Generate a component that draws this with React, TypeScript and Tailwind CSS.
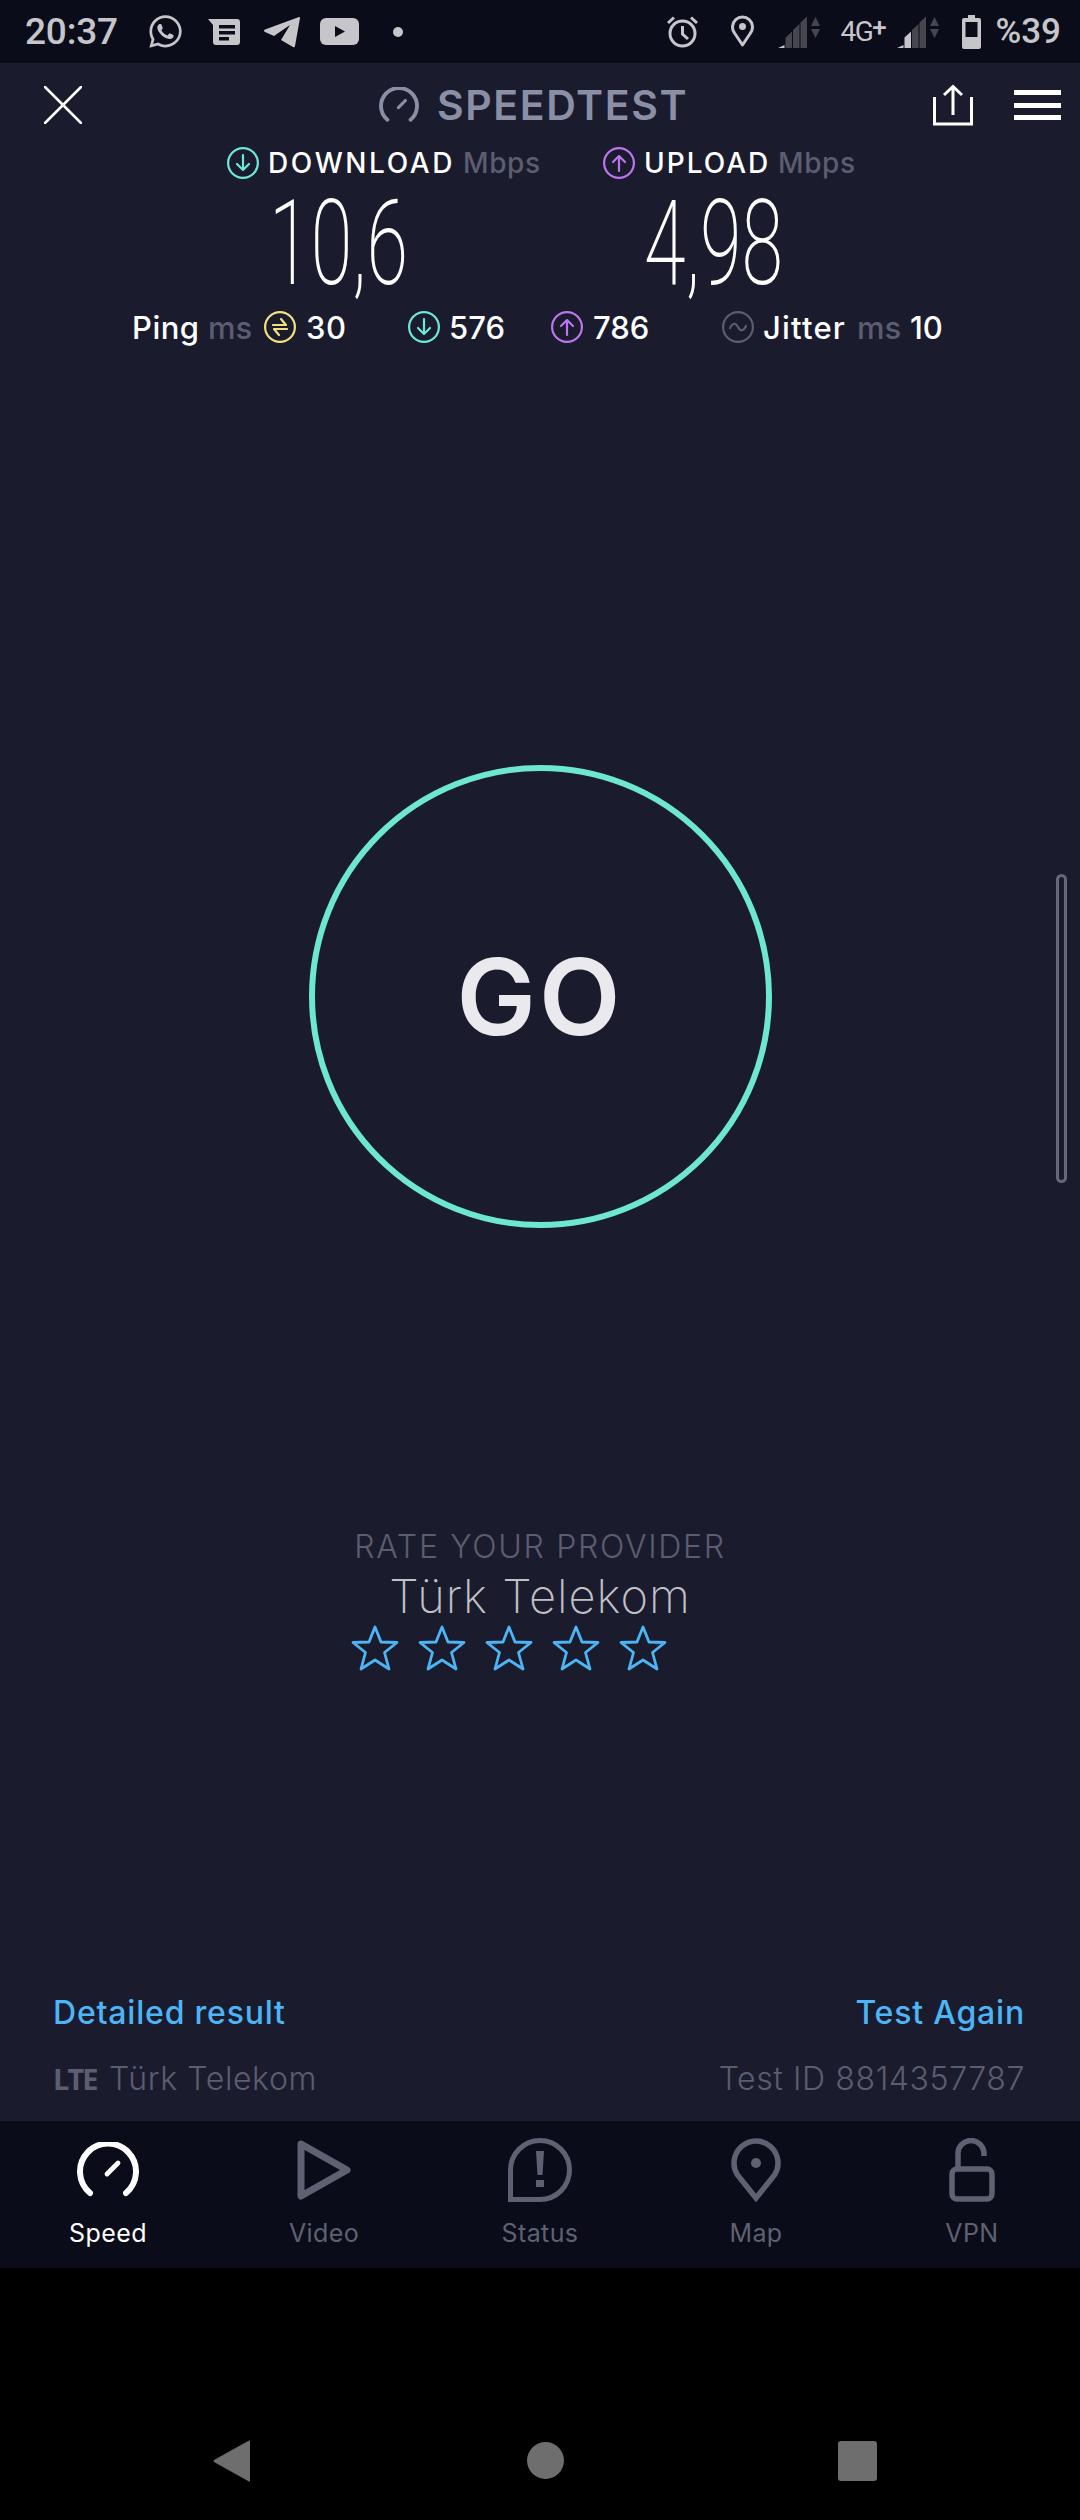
import React from "react";
import { FaWhatsapp } from "react-icons/fa";

const Gauge = ({ className, width = 6 }: { className: string; width?: number }) => (
  <svg viewBox="0 0 64 56" fill="none" stroke="currentColor" strokeLinecap="round" className={className}>
    <path d="M14 51 A28 28 0 1 1 50 51" strokeWidth={width} />
    <path d="M31 32 L42 21" strokeWidth={width * 0.8} />
  </svg>
);

const CircleIcon = ({ color, kind }: { color: string; kind: "down" | "up" | "ping" | "jitter" }) => (
  <svg viewBox="0 0 32 32" fill="none" stroke={color} strokeWidth="2.2" strokeLinecap="round" strokeLinejoin="round" className="w-8 h-8 shrink-0">
    <circle cx="16" cy="16" r="14.9" />
    {kind === "down" && <path d="M16 8 V23 M10 17 L16 23 L22 17" />}
    {kind === "up" && <path d="M16 24 V9 M10 15 L16 9 L22 15" />}
    {kind === "ping" && <path d="M9 14 H22 L17 8 M23 18 H10 L15 24" />}
    {kind === "jitter" && <path d="M8 17 C11 11 14 12 16 16 C18 20 21 21 24 15" />}
  </svg>
);

const Signal = ({ level }: { level: number }) => (
  <svg viewBox="0 0 44 34" className="w-[44px] h-[34px]">
    {[0, 1, 2, 3].map((i) => {
      const x = i * 7.5;
      const top = 24 - i * 7.5;
      return (
        <polygon
          key={i}
          points={`${x},33 ${x + 6.5},33 ${x + 6.5},${top} ${x + (i === 0 ? 6.5 : 0)},${top + 6}`}
          fill={i < level ? "#c5c5ca" : "#46464f"}
        />
      );
    })}
    <polygon points="33,11 37.5,2 42,11" fill="#46464f" />
    <polygon points="33,14 42,14 37.5,23" fill="#46464f" />
  </svg>
);

const Star = () => (
  <svg viewBox="0 0 48 46" fill="none" stroke="#4db5f5" strokeWidth="2.8" strokeLinejoin="round" className="w-[48px] h-[46px]">
    <path d="M24 2 L30 17 L46 17.5 L33.5 27.5 L38 44 L24 35 L10 44 L14.5 27.5 L2 17.5 L18 17 Z" />
  </svg>
);

const NavItem = ({ label, active, children }: { label: string; active?: boolean; children: React.ReactNode }) => (
  <div className={`flex flex-col items-center ${active ? "text-white" : "text-[#5f6172]"}`}>
    <div className="h-[64px] flex items-center justify-center">{children}</div>
    <span className="mt-[16px] text-[25px] leading-[30px] font-normal tracking-[0.4px]">{label}</span>
  </div>
);

export default function App() {
  return (
    <div className="w-[1080px] h-[2520px] bg-black overflow-hidden font-['Inter',sans-serif]">
      {/* Status bar */}
      <div className="h-[63px] bg-[#0a0c19] flex items-center text-[#c5c5ca] font-['Roboto',sans-serif] pl-[25px] pr-[19px]">
        <span className="text-[37px] leading-none font-medium tracking-[-0.2px]">20:37</span>
        <FaWhatsapp className="ml-[29px] w-[37px] h-[37px]" />
        <svg viewBox="0 0 32 27" className="ml-[24px] w-[32px] h-[27px]" fill="currentColor">
          <path d="M0 1 H29 Q32 1 32 4 V24 Q32 27 29 27 H8 Q5 27 5 24 V7 Z" />
          <path d="M11 7 H27 V10.5 H11 Z M11 13 H27 V16.5 H11 Z M11 19 H21 V22.5 H11 Z" fill="#0a0c19" />
        </svg>
        <svg viewBox="0 0 36 32" className="ml-[24px] w-[36px] h-[32px]" fill="currentColor">
          <path d="M35 1 Q36 0.5 36 2 L31 30 Q30.5 32 29 31 L17 24 L26 9 L10 20 L1 16 Q-1 14.5 1 13.5 Z" />
        </svg>
        <svg viewBox="0 0 39 27" className="ml-[20px] w-[39px] h-[27px]" fill="currentColor">
          <rect width="39" height="27" rx="6" />
          <path d="M15 8 L25 13.5 L15 19 Z" fill="#0a0c19" />
        </svg>
        <span className="ml-[34px] w-[10px] h-[10px] rounded-full bg-[#c5c5ca]" />
        <svg viewBox="0 0 33 33" fill="none" stroke="currentColor" strokeWidth="3" className="ml-auto w-[33px] h-[33px]">
          <circle cx="16.5" cy="18.5" r="12.5" />
          <path d="M16.5 11 V19 L22 24 M2 8 L8 2.5 M31 8 L25 2.5" />
        </svg>
        <svg viewBox="0 0 23 33" className="ml-[32px] w-[23px] h-[33px]" fill="none" stroke="currentColor" strokeWidth="3">
          <path d="M11.5 30 L3.5 18 A10 10 0 1 1 19.5 18 Z" strokeLinejoin="round" />
          <circle cx="11.5" cy="11.5" r="3.5" fill="currentColor" stroke="none" />
        </svg>
        <div className="ml-[24px]">
          <Signal level={1} />
        </div>
        <span className="ml-[18px] w-[50px] text-[28px] leading-none whitespace-nowrap tracking-[-1.5px]">
          4G<span className="text-[26px] font-medium relative -top-[5px]">+</span>
        </span>
        <div className="ml-[7px]">
          <Signal level={2} />
        </div>
        <svg viewBox="0 0 19 34" className="ml-[21px] w-[19px] h-[34px]">
          <path d="M6 0 H13 V3 H17 Q19 3 19 5 V32 Q19 34 17 34 H2 Q0 34 0 32 V5 Q0 3 2 3 H6 Z" fill="#c5c5ca" />
          <rect x="3.5" y="7" width="12" height="15" fill="#0a0c19" />
        </svg>
        <span className="ml-[14px] text-[35px] leading-none font-medium">%39</span>
      </div>

      {/* Main */}
      <div className="relative h-[2058px] bg-[#1a1c2e] flex flex-col">
        {/* Header */}
        <div className="flex items-center h-[44px] mt-[20px] pl-[44px] pr-[19px]">
          <svg viewBox="0 0 38 38" fill="none" stroke="white" strokeWidth="2.5" strokeLinecap="round" className="w-[38px] h-[38px]">
            <path d="M1 1 L37 37 M37 1 L1 37" />
          </svg>
          <Gauge className="ml-[296px] w-[42px] h-[36px] text-[#8b8fa5]" width={6} />
          <span className="ml-[17px] text-[41px] leading-none font-semibold text-[#8b8fa5] tracking-[1.6px]">SPEEDTEST</span>
          <svg viewBox="0 0 40 42" fill="none" stroke="white" strokeWidth="3" className="ml-auto w-[40px] h-[42px]">
            <path d="M1.5 13 V40 H38.5 V13 M20 31 V3 M11 11 L20 2.5 L29 11" />
          </svg>
          <div className="ml-[41px] w-[47px] flex flex-col gap-[7.5px]">
            <div className="h-[5px] bg-white" />
            <div className="h-[5px] bg-white" />
            <div className="h-[5px] bg-white" />
          </div>
        </div>

        {/* Download / upload */}
        <div className="flex items-center h-[32px] mt-[20px] pl-[227px] text-[28px] leading-none font-medium text-white">
          <CircleIcon color="#6ee7d8" kind="down" />
          <span className="ml-[9px] w-[186px] tracking-[2.6px]">DOWNLOAD</span>
          <span className="ml-[9px] w-[74px] text-[#5b5d70] tracking-[0.6px]">Mbps</span>
          <div className="ml-[66px]">
            <CircleIcon color="#bd74ee" kind="up" />
          </div>
          <span className="ml-[9px] w-[125px] tracking-[2px]">UPLOAD</span>
          <span className="ml-[9px] text-[#5b5d70] tracking-[0.6px]">Mbps</span>
        </div>

        {/* Speeds */}
        <div className="flex h-[90px] mt-[20px] text-white font-['Roboto',sans-serif] font-extralight text-[118px] leading-[90px]">
          <div className="ml-[272px] w-[133px] flex justify-center">
            <span className="scale-x-[0.64] whitespace-nowrap">10,6</span>
          </div>
          <div className="ml-[242px] w-[133px] flex justify-center">
            <span className="scale-x-[0.64] whitespace-nowrap">4,98</span>
          </div>
        </div>

        {/* Ping row */}
        <div className="flex items-center h-[32px] mt-[22px] pl-[132px] text-[31px] leading-none font-medium text-white">
          <span className="w-[70px] tracking-[0.5px]">Ping</span>
          <span className="ml-[6px] w-[44px] text-[#5b5d70]">ms</span>
          <div className="ml-[12px]">
            <CircleIcon color="#f3df7c" kind="ping" />
          </div>
          <span className="ml-[10px] w-[41px] tracking-[0.5px]">30</span>
          <div className="ml-[61px]">
            <CircleIcon color="#6ee7d8" kind="down" />
          </div>
          <span className="ml-[9px] w-[55px]">576</span>
          <div className="ml-[47px]">
            <CircleIcon color="#bd74ee" kind="up" />
          </div>
          <span className="ml-[10px] w-[56px]">786</span>
          <div className="ml-[73px]">
            <CircleIcon color="#5b5d70" kind="jitter" />
          </div>
          <span className="ml-[9px] w-[84px] tracking-[1.2px]">Jitter</span>
          <span className="ml-[10px] w-[43px] text-[#5b5d70]">ms</span>
          <span className="ml-[10px]">10</span>
        </div>

        {/* GO */}
        <div className="mt-[422px] mx-auto w-[463px] h-[463px] shrink-0 rounded-full border-[6px] border-[#6ee7d2] flex items-center justify-center">
          <span className="text-[106px] leading-none font-semibold text-[#e9e9ee] tracking-[3px]">GO</span>
        </div>

        {/* Rate */}
        <div className="mt-[301px] flex flex-col items-center">
          <span className="text-[32px] leading-[36px] font-light text-[#5b5d70] tracking-[1.7px]">RATE YOUR PROVIDER</span>
          <span className="mt-[4px] text-[47px] leading-[54px] font-extralight text-[#c0c0c6] tracking-[1px]">Türk Telekom</span>
          <div className="mt-[2px] w-[382px] flex gap-[19px] translate-x-[2px]">
            <Star />
            <Star />
            <Star />
            <Star />
            <Star />
          </div>
        </div>

        {/* Result */}
        <div className="mt-auto pl-[53px] pr-[55px] pb-[24px]">
          <div className="flex justify-between text-[32px] leading-[36px] font-medium text-[#4db5f5] tracking-[0.8px]">
            <span>Detailed result</span>
            <span>Test Again</span>
          </div>
          <div className="mt-[30px] flex items-center text-[32px] leading-[36px] font-light text-[#5b5d70] tracking-[0.6px]">
            <span className="text-[29px] font-bold tracking-[-2px] w-[56px] font-['Open_Sans',sans-serif]">LTE</span>
            <span>Türk Telekom</span>
            <span className="ml-auto">Test ID 8814357787</span>
          </div>
        </div>

        {/* Scrollbar */}
        <div className="absolute left-[1056px] top-[811px] w-[11px] h-[309px] rounded-full border-[3px] border-[#66687a]" />
      </div>

      {/* Tab bar */}
      <div className="h-[147px] bg-[#0a0c19] grid grid-cols-5 pt-[17px]">
        <NavItem label="Speed" active>
          <Gauge className="w-[64px] h-[56px]" />
        </NavItem>
        <NavItem label="Video">
          <svg viewBox="0 0 54 60" fill="none" stroke="currentColor" strokeWidth="7" strokeLinejoin="round" className="w-[54px] h-[60px]">
            <path d="M4 4 L50 30 L4 56 Z" />
          </svg>
        </NavItem>
        <NavItem label="Status">
          <svg viewBox="0 0 64 64" fill="none" stroke="currentColor" strokeWidth="5" className="w-[64px] h-[64px]">
            <path d="M2.5 61.5 V32 A29.5 29.5 0 1 1 32 61.5 Z" />
            <path d="M28 13 H36 L34.5 37 H29.5 Z M28 42 H36 V49 H28 Z" fill="currentColor" stroke="none" />
          </svg>
        </NavItem>
        <NavItem label="Map">
          <svg viewBox="0 0 50 64" fill="none" stroke="currentColor" strokeWidth="5.5" className="w-[50px] h-[64px]">
            <path d="M25 60 L6.5 37 A22 22 0 1 1 43.5 37 Z" strokeLinejoin="miter" />
            <circle cx="25" cy="25" r="5" fill="currentColor" stroke="none" />
          </svg>
        </NavItem>
        <NavItem label="VPN">
          <svg viewBox="0 0 46 64" fill="none" stroke="currentColor" strokeWidth="5.5" className="w-[46px] h-[64px]">
            <rect x="3" y="31" width="40" height="30" rx="5" />
            <path d="M9 31 V16 A13 13 0 0 1 35 15 V18" />
          </svg>
        </NavItem>
      </div>

      {/* Android nav */}
      <div className="h-[252px] bg-black relative">
        <svg viewBox="0 0 37 42" className="absolute left-[213px] top-[172px] w-[37px] h-[42px]" fill="#6e6e6e">
          <path d="M36 0.5 Q37 0 37 1.5 V40.5 Q37 42 36 41.5 L1 22 Q0 21 1 20 Z" />
        </svg>
        <div className="absolute left-[527px] top-[174px] w-[37px] h-[37px] rounded-full bg-[#6e6e6e]" />
        <div className="absolute left-[838px] top-[173px] w-[39px] h-[40px] rounded-[3px] bg-[#6e6e6e]" />
      </div>
    </div>
  );
}
